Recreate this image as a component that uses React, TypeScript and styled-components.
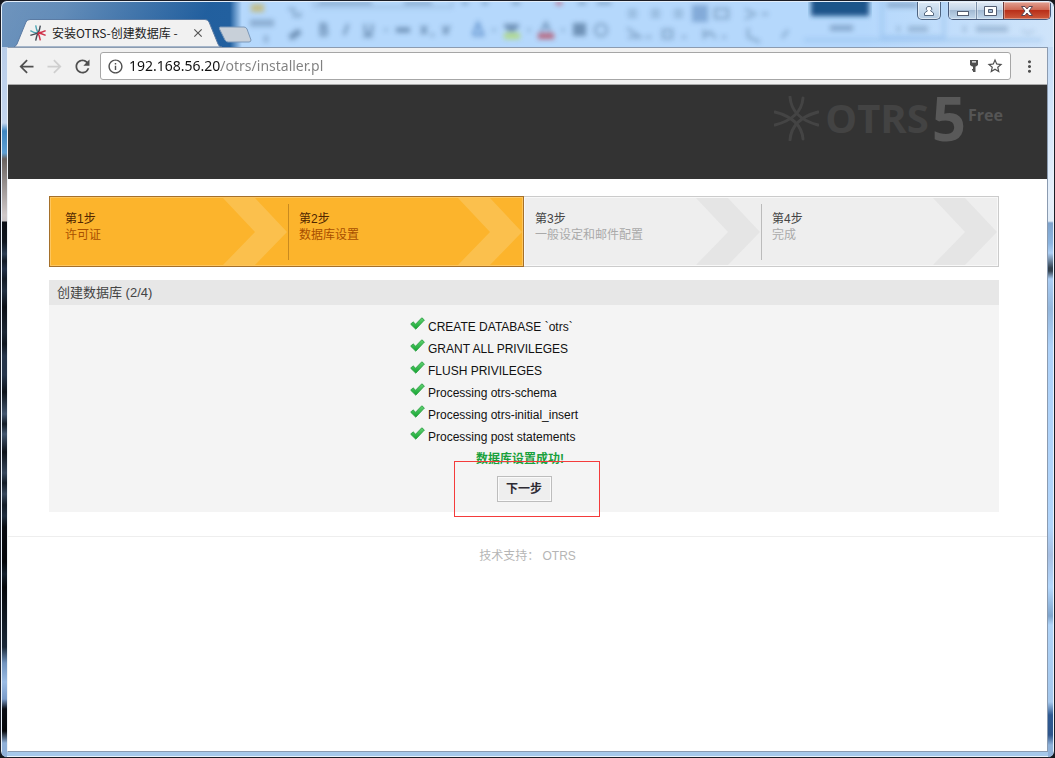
import React from 'react';
import styled, { createGlobalStyle, css } from 'styled-components';
import {
  MdArrowBack,
  MdArrowForward,
  MdClose,
  MdInfoOutline,
  MdMoreVert,
  MdRefresh,
  MdStarBorder,
} from 'react-icons/md';

const cjk = '"Liberation Sans", "Noto Sans CJK SC", sans-serif';
const chromeFont = '"Noto Sans", "Noto Sans CJK SC", sans-serif';

const GlobalStyle = createGlobalStyle`
  *, *::before, *::after { box-sizing: border-box; }
  body { margin: 0; background: #15171c; font-family: ${cjk}; }
  button { font-family: inherit; padding: 0; }
`;

/* ---------- window frame ---------- */

const Window = styled.div`
  position: relative;
  display: flex;
  flex-direction: column;
  min-height: 100vh;
  overflow: hidden;
  border: 1px solid #1b1d26;
  border-radius: 7px;
  background: #a6c8ea;
  box-shadow: inset 0 0 0 1px #eaf3fc;
`;

const TitleBar = styled.header`
  position: relative;
  display: flex;
  align-items: flex-start;
  height: 46px;
  margin: 0 1px;
  padding-left: 12px;
  overflow: hidden;
  border-radius: 6px 6px 0 0;
  border-top: 1px solid #e3eefa;
  background:
    linear-gradient(115deg, rgba(255, 255, 255, 0.36) 0, rgba(255, 255, 255, 0.3) 60px, rgba(255, 255, 255, 0) 190px),
    linear-gradient(90deg, #1d5898 0, #22609f 228px, #b5d8fc 240px, #b5d8fc 82%, #cfe4fa 100%);
`;

const Backdrop = styled.svg`
  position: absolute;
  top: 0;
  left: 230px;
  width: 815px;
  height: 46px;
`;

const Tab = styled.div`
  position: relative;
  display: flex;
  align-items: center;
  width: 208px;
  height: 28px;
  margin-top: 17px;
  padding: 0 17px 0 16px;
  gap: 6px;
  font: 12px/28px ${chromeFont};
  color: #222;
`;

const TabShape = styled.svg`
  position: absolute;
  inset: 0;
  width: 100%;
  height: 100%;
`;

const TabTitle = styled.span`
  position: relative;
  flex: 1;
  white-space: nowrap;
  font-family: "Noto Sans CJK SC", sans-serif;
`;

const Favicon = styled.svg`
  position: relative;
  width: 16px;
  height: 16px;
`;

const TabClose = styled.button`
  position: relative;
  display: flex;
  border: 0;
  background: none;
  color: #555;
`;

const NewTab = styled.button`
  display: flex;
  margin-top: 24px;
  margin-left: -4px;
  border: 0;
  background: none;
`;

const WindowButtons = styled.div`
  position: relative;
  display: flex;
  margin-left: auto;
  padding-right: 2px;
`;

const UserButton = styled.button`
  display: grid;
  place-items: center;
  width: 24px;
  height: 18px;
  margin-right: 7px;
  border: 1px solid #4d6380;
  border-top: 0;
  border-radius: 0 0 5px 5px;
  background: linear-gradient(#dbe9f6, #b3cbe3);
  box-shadow: inset 0 0 0 1px rgba(255, 255, 255, 0.55);
`;

const ButtonGroup = styled.div`
  display: flex;
  height: 18px;
  overflow: hidden;
  border: 1px solid #47597a;
  border-top: 0;
  border-radius: 0 0 5px 5px;
`;

const FrameButton = styled.button<{ $close?: boolean }>`
  display: grid;
  place-items: center;
  width: ${(p) => (p.$close ? 47 : 27)}px;
  border: 0;
  border-left: ${(p) => (p.$close ? '1px solid #6d3a3a' : '1px solid #7c8fa8')};
  background: ${(p) =>
    p.$close
      ? 'linear-gradient(#e2a193 0, #cf6a55 45%, #b92f19 50%, #cd5a3c 100%)'
      : 'linear-gradient(#dfe9f4 0, #c4d5e8 45%, #a2b9d3 50%, #c2d7ec 100%)'};
  box-shadow: inset 0 0 0 1px rgba(255, 255, 255, 0.35);
  &:first-child { border-left: 0; }
`;

const FrameBody = styled.div`
  display: flex;
  flex: 1;
  margin: 0 1px;
`;

const edge = css`
  flex: none;
  width: 5px;
`;

const LeftEdge = styled.div`
  ${edge}
  background: linear-gradient(
    #b9cde8 0, #c4d6ee 76px, #3f86c0 84px, #5f9fd2 106px, #69625f 112px, #cfc8c8 168px, #c9c4c6 174px,
    #0a0e14 175px, #10161f 195px, #2c3d52 207px, #131b25 214px, #223046 222px, #131b25 232px,
    #222f40 244px, #0b0f15 260px, #1b2633 285px, #0f161e 297px, #26354a 309px, #26354a 328px,
    #0d1219 345px, #43566e 367px, #141c26 377px, #43566e 387px, #0d1219 405px, #37475b 426px,
    #141c26 436px, #37475b 447px, #141c26 458px, #1f2d3d 469px, #090c11 480px, #05070a 515px,
    #14202c 527px, #05070a 540px, #1b2938 600px, #7193bd 616px, #9bbce4 635px, #7a9bc8 652px,
    #0a0d14 662px, #05070a 684px, #8fb0d8 696px
  );
`;

const RightEdge = styled.div`
  ${edge}
  background: linear-gradient(
    #c3dbf6 0, #d2e5fa 60px, #e6f0fb 150px, #e2edf8 174px, #7ea3cc 176px, #8bb4df 196px, #abcef4 206px,
    #32414f 221px, #32414f 224px, #aacdf4 232px, #94b7dc 262px, #aed2f9 300px, #b1d5fb 480px,
    #a7bfe2 508px, #b4d8fd 540px, #7fa5cd 569px, #b0d4f8 578px, #a4c7ec 655px, #2f5a92 668px,
    #2f568c 688px, #8fb1d8 698px
  );
`;

const Client = styled.div`
  display: flex;
  flex: 1;
  flex-direction: column;
  min-width: 0;
  margin-bottom: 5px;
  border: 1px solid #8b9bb0;
  border-left-color: #eef2f6;
  background: #fff;
`;

/* ---------- browser toolbar ---------- */

const Toolbar = styled.div`
  display: flex;
  align-items: center;
  height: 37px;
  padding: 0 4px 0 8px;
  border-bottom: 1px solid #a9a9a9;
  background: #f1f1f1;
`;

const ToolButton = styled.button<{ $muted?: boolean }>`
  display: grid;
  place-items: center;
  width: 28px;
  height: 28px;
  border: 0;
  background: none;
  color: ${(p) => (p.$muted ? '#cfcfcf' : '#505050')};
`;

const NavButtons = styled.div`
  display: flex;
  margin-left: -4px;
  margin-right: 4px;
`;

const AddressBar = styled.form`
  display: flex;
  flex: 1;
  align-items: center;
  height: 28px;
  margin-right: 4px;
  padding: 0 6px;
  gap: 5px;
  border: 1px solid #a6a6a6;
  border-radius: 3px;
  background: #fff;
  color: #505050;
`;

const AddressInput = styled.input`
  flex: 1;
  min-width: 0;
  height: 24px;
  padding: 0;
  border: 0;
  outline: 0;
  color: #222;
  font: 14px/24px "Noto Sans", sans-serif;
  background: linear-gradient(90deg, #111 92px, #808080 92px);
  -webkit-background-clip: text;
  background-clip: text;
  -webkit-text-fill-color: transparent;
`;

const IconButton = styled.button`
  display: flex;
  border: 0;
  background: none;
  color: inherit;
`;

/* ---------- installer page ---------- */

const PageHeader = styled.div`
  display: flex;
  justify-content: flex-end;
  height: 94px;
  padding: 7px 44px 0 0;
  background: #333;
  font-family: "Open Sans", sans-serif;
  font-weight: 700;
`;

const Brand = styled.div`
  display: flex;
  height: 52px;
  align-items: center;
`;

const BrandName = styled.span`
  margin-left: 6px;
  font-size: 40px;
  line-height: 52px;
  color: #434343;
`;

const BrandVersion = styled.span`
  margin-left: 3px;
  font-size: 60px;
  line-height: 52px;
  color: #595959;
`;

const BrandEdition = styled.span`
  align-self: flex-start;
  margin-left: 2px;
  font-size: 16px;
  line-height: 46px;
  color: #555;
`;

const Content = styled.main`
  padding: 17px 48px 24px 41px;
`;

const Steps = styled.div`
  display: grid;
  grid-template-columns: 1fr 1fr;
  height: 71px;
  margin-bottom: 13px;
`;

const StepGroup = styled.div<{ $done?: boolean }>`
  display: grid;
  grid-template-columns: ${(p) => (p.$done ? '239fr 236fr' : '1fr 1fr')};
  border: 1px solid ${(p) => (p.$done ? '#a5702a' : '#cbcbcb')};
  border-left-width: ${(p) => (p.$done ? 1 : 0)}px;
  background: ${(p) => (p.$done ? '#fcb42c' : '#eee')};
  box-shadow: inset 0 0 0 1px ${(p) => (p.$done ? '#fdc65f' : '#f8f8f8')};
  color: ${(p) => (p.$done ? '#502600' : '#444')};
`;

const Step = styled.div<{ $first?: boolean; $line?: string }>`
  position: relative;
  padding: 14px 0 0 ${(p) => (p.$first ? 15 : 11)}px;
  font-size: 12px;
  line-height: 16px;
  ${(p) =>
    p.$line &&
    css`
      &::before {
        content: '';
        position: absolute;
        top: 7px;
        bottom: 6px;
        left: 0;
        width: 1px;
        background: ${p.$line};
      }
    `}
`;

const StepName = styled.div`
  position: relative;
`;

const StepInfo = styled.div<{ $done?: boolean }>`
  position: relative;
  color: ${(p) => (p.$done ? '#a84f00' : '#aaa')};
`;

const Chevron = styled.svg<{ $done?: boolean }>`
  position: absolute;
  top: 1px;
  right: 1px;
  width: 64px;
  height: 67px;
  fill: ${(p) => (p.$done ? '#fbc04d' : '#e5e5e5')};
`;

const Panel = styled.section`
  background: #f4f4f4;
`;

const PanelTitle = styled.h2`
  margin: 0;
  padding: 0 8px;
  background: #e7e7e7;
  color: #444;
  font-size: 13px;
  font-weight: 400;
  line-height: 25px;
`;

const Results = styled.div`
  width: 228px;
  margin: 0 auto;
  padding: 11px 0 10px;
`;

const ResultList = styled.ul`
  margin: 0;
  padding: 0;
  list-style: none;
`;

const Result = styled.li`
  display: flex;
  gap: 3px;
  color: #111;
  font-size: 12px;
  line-height: 22px;
  white-space: nowrap;
`;

const Tick = styled.svg`
  flex: none;
  width: 15px;
  height: 16px;
`;

const Success = styled.p`
  margin: 0;
  padding-right: 8px;
  color: #19a03c;
  font-size: 12px;
  font-weight: 700;
  line-height: 22px;
  text-align: center;
`;

const Actions = styled.div`
  position: relative;
  display: flex;
  justify-content: center;
  padding-top: 6px;
`;

const NextButton = styled.button`
  width: 55px;
  height: 26px;
  border: 1px solid #bdbdbd;
  background: #eee;
  box-shadow: inset 0 0 0 1px #fafafa;
  color: #2d2a33;
  font-size: 12px;
  font-weight: 700;
  line-height: 22px;
`;

const Highlight = styled.div`
  position: absolute;
  top: -9px;
  left: 44px;
  width: 146px;
  height: 56px;
  border: 1px solid #f43b3b;
  pointer-events: none;
`;

const Footer = styled.footer`
  padding: 10px 0;
  border-top: 1px solid #eee;
  color: #b5b5b5;
  font-size: 12px;
  line-height: 18px;
  text-align: center;
`;

const FooterLink = styled.a`
  color: inherit;
  text-decoration: none;
`;

const results = [
  'CREATE DATABASE `otrs`',
  'GRANT ALL PRIVILEGES',
  'FLUSH PRIVILEGES',
  'Processing otrs-schema',
  'Processing otrs-initial_insert',
  'Processing post statements',
];

const arms = [
  'M16 1C17 14 25 24 44 29',
  'M29 2C28 14 20 24 1 29',
  'M16 44C17 31 25 21 44 16',
  'M29 43C28 31 20 21 1 16',
];

const StepArrow = ({ done }: { done?: boolean }) => (
  <Chevron $done={done} viewBox="0 0 64 67" aria-hidden="true">
    <path d="M0 0H32L64 34L32 67H0L32 34Z" />
  </Chevron>
);

const TickIcon = () => (
  <Tick viewBox="0 0 15 16" aria-hidden="true">
    <defs>
      <linearGradient id="tick" x1="0" y1="0" x2="0" y2="1">
        <stop offset="0" stopColor="#62d273" />
        <stop offset="1" stopColor="#12a52f" />
      </linearGradient>
    </defs>
    <path d="M.7 8.2L3 5.8L5.6 8.2L11.8 1.8L14.4 4L5.8 13.2Z" fill="url(#tick)" stroke="#2fa046" strokeWidth=".9" strokeLinejoin="round" />
  </Tick>
);

/* Word-processor ribbon showing blurred through the glass title bar */
const Ribbon = () => (
  <Backdrop viewBox="0 0 815 46" aria-hidden="true">
    <defs>
      <filter id="glass" x="-5%" y="-30%" width="110%" height="160%">
        <feGaussianBlur stdDeviation="2.4" />
      </filter>
    </defs>
    <g filter="url(#glass)" fill="none" stroke="#55779c" strokeWidth="2.5" opacity=".72">
      <path d="M18 21H42M32 37h4" strokeWidth="7" opacity=".6" />
      <path d="M19 2H32V10H19Z" fill="#c7b25c" stroke="none" />
      <path d="M56 7H62V14H68V10" opacity=".7" />
      <path d="M58 36L68 29" strokeWidth="6" />
      <path d="M82 -2V5H220V-2" stroke="#8fb0d3" strokeWidth="2" />
      <path d="M86 1H140M172 1H200M230 1h6M250 1h6M280 1h8M346 1h8M365 1h14" />
      <path d="M324 1h6" stroke="#c04a62" strokeWidth="4" />
      <path d="M89 22V33H94Q97 29 92 27H89V22H93Q96 25 92 27M116 22L112 33M133 22V29Q136 34 140 29V22M131 34H141" />
      <path d="M164 28H178" strokeWidth="5" />
      <path d="M189 24L195 32M195 24L189 32M199 33h3M211 24L216 32M218 24L211 32" />
      <path d="M241 33L246 21L251 33H241" stroke="#4b7fc0" />
      <path d="M272 24H287M275 28H284" strokeWidth="4" />
      <path d="M272 34H288" stroke="#b0dc5c" strokeWidth="6" />
      <path d="M309 30L314 21L318 30" />
      <path d="M306 34H322" stroke="#b83a50" strokeWidth="6" />
      <path d="M343 23H352V32H343Z" fill="#55779c" strokeWidth="4" />
      <circle cx="369" cy="28" r="6" opacity=".7" />
      <path d="M152 28h4M260 28h4M295 28h4M329 28h4" opacity=".6" />
      <path d="M396 9H405M396 14H405M419 9H428M419 14H428M442 9H451M442 14H451" opacity=".7" />
      <path d="M460 3H476V20H460Z" fill="#5e89bd" stroke="none" opacity=".8" />
      <path d="M483 7H496V16H483ZM513 7L523 12L513 17M530 12h6M395 26L408 35H396M414 35h5M431 28H440V36H431ZM450 35h4M472 27V35L478 30L484 36M490 35h4M516 26V35L528 40M550 36L556 28" opacity=".7" />
      <path d="M598 26H621" strokeWidth="6" opacity=".65" />
      <path d="M572 38H810M650 -4V35H712V-4" stroke="#7fb0e6" opacity=".7" />
      <path d="M655 3H686" strokeWidth="5" opacity=".7" />
      <path d="M665 27h3M676 27H696M731 27h3M744 27H776" strokeWidth="6" opacity=".5" />
      <path d="M790 28L796 32L802 28" opacity=".3" />
    </g>
    <path d="M579 -6H637V14H579Z" fill="#1c548a" filter="url(#glass)" />
  </Backdrop>
);

export default function App() {
  return (
    <Window>
      <GlobalStyle />
      <TitleBar>
        <Ribbon />
        <Tab>
          <TabShape viewBox="0 0 208 28" preserveAspectRatio="none" aria-hidden="true">
            <path d="M0 28Q2 27 3 25L12 3Q13 .5 16 .5H191Q194 .5 195 3L204 25Q205 28 208 28Z" fill="#f1f1f1" stroke="#5b7ba3" strokeWidth="1" />
          </TabShape>
          <Favicon viewBox="0 0 45 45" fill="none" strokeWidth="4" aria-hidden="true">
            <path d="M16 1Q18 15 23 22M1 16Q14 24 23 22" stroke="#4fa6b5" />
            <path d="M29 2Q27 15 23 22M1 29Q14 25 23 22M16 44Q18 30 23 22" stroke="#444b55" />
            <path d="M44 16Q32 22 22 22M44 29Q32 24 22 22M29 43Q27 30 22 22" stroke="#d0324a" />
          </Favicon>
          <TabTitle>安装OTRS-创建数据库 -</TabTitle>
          <TabClose type="button" aria-label="Close tab">
            <MdClose size={14} />
          </TabClose>
        </Tab>
        <NewTab type="button" aria-label="New tab">
          <svg width="34" height="17" viewBox="0 0 34 17" aria-hidden="true">
            <path d="M2 1H26Q28 1 29 3L33 14Q33 16 31 16H10Q8 16 7 14L1.500 3Q1 1 2 1Z" fill="#c8d0d9" stroke="#7d98b8" />
          </svg>
        </NewTab>
        <WindowButtons>
          <UserButton type="button" aria-label="Profile">
            <svg width="12" height="12" viewBox="0 0 12 12" aria-hidden="true">
              <path d="M6 1.500A2.300 2.300 0 0 1 7.500 5.800L10.500 8V10.500H1.500V8L4.500 5.800A2.300 2.300 0 0 1 6 1.500Z" fill="#fff" stroke="#56687f" />
            </svg>
          </UserButton>
          <ButtonGroup>
            <FrameButton type="button" aria-label="Minimize">
              <svg width="14" height="12" viewBox="0 0 14 12" aria-hidden="true">
                <rect x="1.500" y="6.500" width="11" height="4" fill="#fff" stroke="#535d72" />
              </svg>
            </FrameButton>
            <FrameButton type="button" aria-label="Maximize">
              <svg width="13" height="12" viewBox="0 0 13 12" aria-hidden="true">
                <path d="M.5 1.500H12.500V10.500H.5ZM4.500 4.500V7.500H8.500V4.500Z" fill="#fff" fillRule="evenodd" stroke="#535d72" />
              </svg>
            </FrameButton>
            <FrameButton $close type="button" aria-label="Close">
              <svg width="14" height="12" viewBox="0 0 14 12" aria-hidden="true">
                <path d="M1.500 1.500H5L7 4L9 1.500H12.500L9 6L12.500 10.500H9L7 8L5 10.500H1.500L5 6Z" fill="#fff" stroke="#5b4653" />
              </svg>
            </FrameButton>
          </ButtonGroup>
        </WindowButtons>
      </TitleBar>
      <FrameBody>
        <LeftEdge />
        <Client>
          <Toolbar>
            <NavButtons>
              <ToolButton type="button" aria-label="Back">
                <MdArrowBack size={21} />
              </ToolButton>
              <ToolButton type="button" aria-label="Forward" $muted>
                <MdArrowForward size={21} />
              </ToolButton>
              <ToolButton type="button" aria-label="Reload">
                <MdRefresh size={21} />
              </ToolButton>
            </NavButtons>
            <AddressBar>
              <MdInfoOutline size={17} />
              <AddressInput aria-label="Address" defaultValue="192.168.56.20/otrs/installer.pl" />
              <IconButton type="button" aria-label="Saved password">
                <svg width="14" height="14" viewBox="0 0 14 14" fill="#505050" aria-hidden="true">
                  <path d="M3 1H11V6L9 7.500H8.500V13H6V11.500H5V10H6V7.500H5L3 6ZM5 2.200V3.500H9V2.200Z" fillRule="evenodd" />
                </svg>
              </IconButton>
              <IconButton type="button" aria-label="Bookmark">
                <MdStarBorder size={18} />
              </IconButton>
            </AddressBar>
            <ToolButton type="button" aria-label="Menu">
              <MdMoreVert size={19} />
            </ToolButton>
          </Toolbar>
          <PageHeader>
            <Brand>
              <svg width="45" height="45" viewBox="0 0 45 45" fill="none" stroke="#444" strokeWidth="3" strokeLinecap="round" aria-hidden="true">
                {arms.map((d) => (
                  <path key={d} d={d} />
                ))}
              </svg>
              <BrandName>OTRS</BrandName>
              <BrandVersion>5</BrandVersion>
              <BrandEdition>Free</BrandEdition>
            </Brand>
          </PageHeader>
          <Content>
            <Steps role="list">
              <StepGroup $done>
                <Step role="listitem" $first>
                  <StepArrow done />
                  <StepName>第1步</StepName>
                  <StepInfo $done>许可证</StepInfo>
                </Step>
                <Step role="listitem" $line="#c98a1f">
                  <StepArrow done />
                  <StepName>第2步</StepName>
                  <StepInfo $done>数据库设置</StepInfo>
                </Step>
              </StepGroup>
              <StepGroup>
                <Step role="listitem">
                  <StepArrow />
                  <StepName>第3步</StepName>
                  <StepInfo>一般设定和邮件配置</StepInfo>
                </Step>
                <Step role="listitem" $line="#bbb">
                  <StepArrow />
                  <StepName>第4步</StepName>
                  <StepInfo>完成</StepInfo>
                </Step>
              </StepGroup>
            </Steps>
            <Panel>
              <PanelTitle>创建数据库 (2/4)</PanelTitle>
              <Results>
                <ResultList>
                  {results.map((text) => (
                    <Result key={text}>
                      <TickIcon />
                      {text}
                    </Result>
                  ))}
                </ResultList>
                <Success>数据库设置成功!</Success>
                <Actions>
                  <NextButton type="button">下一步</NextButton>
                  <Highlight />
                </Actions>
              </Results>
            </Panel>
          </Content>
          <Footer>
            技术支持： <FooterLink href="#otrs">OTRS</FooterLink>
          </Footer>
        </Client>
        <RightEdge />
      </FrameBody>
    </Window>
  );
}
